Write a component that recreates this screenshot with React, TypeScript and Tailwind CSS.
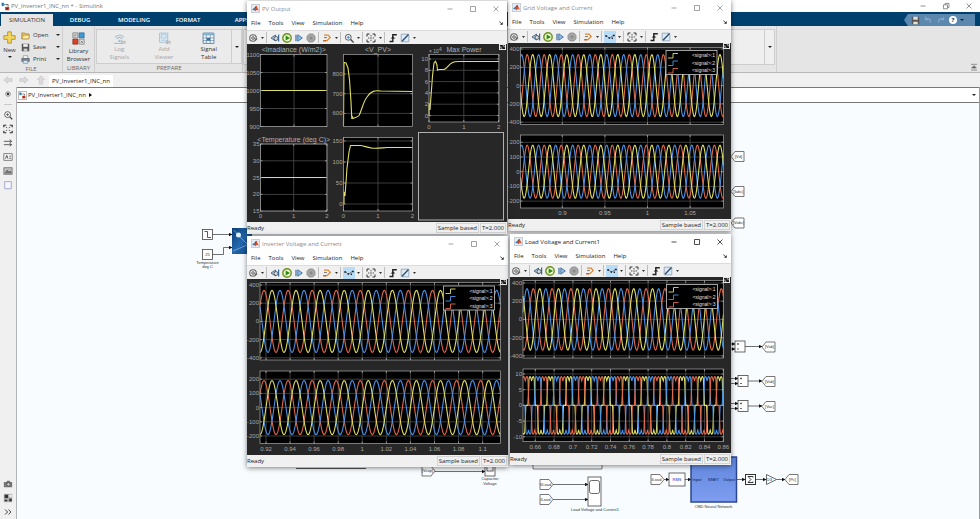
import type { ReactNode } from 'react';
import clsx from 'clsx';

const YELLOW = '#e0df66';
const BLUE = '#4a93e6';
const RED = '#e0694a';

type Tick = { at: number; label: string };

type Axes = {
  x: [number, number];
  y: [number, number];
  xTicks: Tick[];
  yTicks: Tick[];
  showX?: boolean;
  title?: string;
};

type Wave = { color: string; peak: number };

function ticks(start: number, step: number, labels: string[]): Tick[] {
  return labels.map((label, i) => ({ at: start + i * step, label }));
}

function sinePath(axes: Axes, mid: number, amp: number, period: number, peak: number) {
  const pts: string[] = [];
  for (let x = axes.x[0]; x <= axes.x[1]; x += 0.5) {
    const y = mid - amp * Math.cos((2 * Math.PI * (x - peak)) / period);
    pts.push(`${x.toFixed(1)} ${y.toFixed(2)}`);
  }
  return `M${pts.join('L')}`;
}

// six-pulse rectifier current: +120deg, 60deg off, -120deg, 60deg off
function pulsePath(axes: Axes, mid: number, unit: number, period: number, peak: number) {
  const pts: string[] = [];
  for (let x = axes.x[0]; x <= axes.x[1]; x += 0.25) {
    const t = (2 * Math.PI * (x - peak)) / period;
    const c = Math.cos(t);
    const ramp = Math.min(1, Math.max(0, (Math.abs(c) - 0.5) / 0.3 + 0.5));
    const level = Math.sign(c) * ramp * (7.8 + 1.4 * Math.abs(Math.sin(3 * t)));
    pts.push(`${x.toFixed(2)} ${(mid - level * unit).toFixed(2)}`);
  }
  return `M${pts.join('L')}`;
}

function AxesBox({ axes, children }: { axes: Axes; children?: ReactNode }) {
  const [x0, x1] = axes.x;
  const [y0, y1] = axes.y;
  return (
    <g>
      <rect x={x0} y={y0} width={x1 - x0} height={y1 - y0} fill="#000" />
      <g stroke="#4c4c4c" strokeWidth="0.8">
        {axes.xTicks.map((t) => (
          <path key={t.at} d={`M${t.at} ${y0}V${y1}`} />
        ))}
        {axes.yTicks.map((t) => (
          <path key={t.at} d={`M${x0} ${t.at}H${x1}`} />
        ))}
      </g>
      <g fill="none" strokeWidth="1.1">
        {children}
      </g>
      <rect x={x0} y={y0} width={x1 - x0} height={y1 - y0} fill="none" stroke="#969696" strokeWidth="0.8" />
      <g stroke="#a8a8a8" strokeWidth="0.8">
        {axes.xTicks.map((t) => (
          <path key={t.at} d={`M${t.at} ${y1}v-2M${t.at} ${y0}v2`} />
        ))}
        {axes.yTicks.map((t) => (
          <path key={t.at} d={`M${x0} ${t.at}h2M${x1} ${t.at}h-2`} />
        ))}
      </g>
      <g className="text-[6px]" fill="#a8a8a8" dominantBaseline="central">
        {axes.yTicks.map((t) => (
          <text key={t.at} x={x0 - 1} y={t.at} textAnchor="end">
            {t.label}
          </text>
        ))}
        {axes.showX &&
          axes.xTicks.map((t) => (
            <text key={t.at} x={t.at} y={y1 + 5} textAnchor="middle">
              {t.label}
            </text>
          ))}
      </g>
      {axes.title && (
        <text
          className="text-[7px]"
          fill="#b0b0b0"
          x={(x0 + x1) / 2}
          y={y0 - 5}
          textAnchor="middle"
          dominantBaseline="central"
        >
          {axes.title}
        </text>
      )}
    </g>
  );
}

function Legend({ x, y }: { x: number; y: number }) {
  return (
    <g>
      <rect x={x} y={y} width="51" height="24" fill="#000" stroke="#c8c8c8" strokeWidth="0.8" />
      {[YELLOW, BLUE, RED].map((color, i) => (
        <g key={color}>
          <path
            d={`M${x + 2} ${y + 7.5 + i * 7.5}h5v-4.5h5`}
            fill="none"
            stroke={color}
            strokeWidth="0.9"
          />
          <text
            className="text-[5px]"
            fill="#e0e0e0"
            x={x + 49}
            y={y + 4.5 + i * 7.5}
            textAnchor="end"
            dominantBaseline="central"
          >
            {`<signal>:${i + 1}`}
          </text>
        </g>
      ))}
    </g>
  );
}

function PlotArea({ width, height, children }: { width: number; height: number; children: ReactNode }) {
  return (
    <svg
      viewBox={`0 0 ${width} ${height}`}
      className="block w-full bg-[#272727] font-['Liberation_Sans',sans-serif]"
    >
      {children}
      <rect x={width - 8} y="0" width="7" height="6" fill="#e8e8e8" />
      <path d={`M${width - 7} 1h5v4h-5z`} fill="#111" />
      <path
        d={`M${width - 6.2} 2.2v2h1.6M${width - 4.4} 1.8h1.6v1.6`}
        fill="none"
        stroke="#fff"
        strokeWidth="0.7"
      />
    </svg>
  );
}

const SECONDS = ['0', '1', '2'];

function PvPlot() {
  const irradiance: Axes = {
    x: [13.5, 80],
    y: [10.5, 82.5],
    xTicks: [{ at: 47, label: '1' }],
    yTicks: ticks(10.5, 18, ['1100', '1050', '1000', '950', '900']),
    title: '<Irradiance (W/m2)>',
  };
  const voltage: Axes = {
    x: [96.5, 165.5],
    y: [10.5, 82.5],
    xTicks: [{ at: 131, label: '1' }],
    yTicks: ticks(30, 19.7, ['800', '700', '600']),
    title: '<V_PV>',
  };
  const power: Axes = {
    x: [182, 252],
    y: [10.5, 78],
    xTicks: ticks(182, 34.8, SECONDS),
    yTicks: ticks(15, 11.3, ['10', '8', '6', '4', '2', '0']),
    showX: true,
    title: 'Max Power',
  };
  const temperature: Axes = {
    x: [13.5, 80],
    y: [100, 167],
    xTicks: ticks(13.5, 33.2, SECONDS),
    yTicks: ticks(100, 16.8, ['35', '30', '25', '20', '15']),
    showX: true,
    title: '<Temperature (deg C)>',
  };
  const current: Axes = {
    x: [96.5, 165.5],
    y: [93.5, 167],
    xTicks: ticks(96.5, 34.5, SECONDS),
    yTicks: ticks(97, 21, ['150', '100', '50', '0']),
    showX: true,
  };
  return (
    <PlotArea width={260} height={178}>
      <AxesBox axes={irradiance}>
        <path d="M13.5 46.5H80" stroke={YELLOW} />
      </AxesBox>
      <AxesBox axes={voltage}>
        <path
          d="M96.5 82L97 18.5L99 19L101 24L102.5 36L104 58L104.8 75L105 72L106 74.5C108 73 110 74 112 71.5C115 66 116 58 120 53C124 47 128 46 134 47L165.5 47.5"
          stroke={YELLOW}
        />
      </AxesBox>
      <AxesBox axes={power}>
        <path
          d="M182 72V59L183 66L185.5 32L187 19L188.5 17.3L190 21L190.5 26.2L192 25.5H197C201 24 201 21 205 18.8C207 17.6 209 17.5 212 17.5H252"
          stroke={YELLOW}
        />
      </AxesBox>
      <text className="text-[5px]" fill="#b0b0b0" x="182" y="9">
        × 10<tspan dy="-2">4</tspan>
      </text>
      <AxesBox axes={temperature}>
        <path d="M13.5 133.5H80" stroke={YELLOW} />
      </AxesBox>
      <AxesBox axes={current}>
        <path
          d="M97 160V148L98 152L100 124L102 108L103.5 101.5H114C118 102 120 103.6 126 104.2C131 104.6 136 103.7 140 103.5H165.5"
          stroke={YELLOW}
        />
      </AxesBox>
      <rect x="171.5" y="88.5" width="85" height="87.5" fill="none" stroke="#b0b0b0" />
    </PlotArea>
  );
}

const VOLT_LABELS = ['400', '200', '0', '-200', '-400'];
const AMP_LABELS = ['200', '100', '0', '-100', '-200'];

function GridPlot() {
  const xTicks = ticks(54.3, 42.6, ['0.9', '0.95', '1', '1.05']);
  const top: Axes = { x: [12.5, 215.5], y: [4.5, 81.5], xTicks, yTicks: ticks(6, 18.3, VOLT_LABELS) };
  const bottom: Axes = {
    x: [12.5, 215.5],
    y: [92, 165],
    xTicks,
    yTicks: ticks(99.3, 14.7, AMP_LABELS),
    showX: true,
  };
  const waves: Wave[] = [
    { color: RED, peak: 19.2 },
    { color: BLUE, peak: 13.6 },
    { color: YELLOW, peak: 24.7 },
  ];
  return (
    <PlotArea width={223} height={176}>
      <AxesBox axes={top}>
        {waves.map((w) => (
          <path key={w.color} d={sinePath(top, 42.6, 31, 17.02, w.peak)} stroke={w.color} />
        ))}
      </AxesBox>
      <Legend x={158} y={7.5} />
      <AxesBox axes={bottom}>
        {waves.map((w) => (
          <path key={w.color} d={sinePath(bottom, 128.7, 26.5, 17.02, w.peak)} stroke={w.color} />
        ))}
      </AxesBox>
    </PlotArea>
  );
}

function InverterPlot() {
  const xTicks = ticks(19, 24.07, [
    '0.92', '0.94', '0.96', '0.98', '1', '1.02', '1.04', '1.06', '1.08', '1.1',
  ]);
  const top: Axes = { x: [13, 253.5], y: [3.5, 81], xTicks, yTicks: ticks(6, 18.2, VOLT_LABELS) };
  const bottom: Axes = {
    x: [13, 253.5],
    y: [92, 164.5],
    xTicks,
    yTicks: ticks(100.2, 14.2, AMP_LABELS),
    showX: true,
  };
  const waves: Wave[] = [
    { color: RED, peak: 17 },
    { color: BLUE, peak: 33 },
    { color: YELLOW, peak: 25 },
  ];
  return (
    <PlotArea width={261} height={176}>
      <AxesBox axes={top}>
        {waves.map((w) => (
          <path key={w.color} d={sinePath(top, 42.4, 31, 24.07, w.peak)} stroke={w.color} />
        ))}
      </AxesBox>
      <Legend x={196.5} y={7} />
      <AxesBox axes={bottom}>
        {waves.map((w) => (
          <path key={w.color} d={sinePath(bottom, 128.6, 27, 24.07, w.peak)} stroke={w.color} />
        ))}
      </AxesBox>
    </PlotArea>
  );
}

function LoadPlot() {
  const xTicks = ticks(25.3, 18.8, [
    '0.66', '0.68', '0.7', '0.72', '0.74', '0.76', '0.78', '0.8', '0.82', '0.84', '0.86',
  ]);
  const top: Axes = { x: [13, 213.5], y: [3.5, 81], xTicks, yTicks: ticks(6, 18.2, VOLT_LABELS) };
  const bottom: Axes = {
    x: [13, 213.5],
    y: [92, 164.5],
    xTicks,
    yTicks: ticks(97, 15.7, ['10', '5', '0', '-5', '-10']),
    showX: true,
  };
  const voltage: Wave[] = [
    { color: RED, peak: 23.3 },
    { color: BLUE, peak: 17 },
    { color: YELLOW, peak: 29.7 },
  ];
  const current: Wave[] = [
    { color: YELLOW, peak: 21.6 },
    { color: BLUE, peak: 27.9 },
    { color: RED, peak: 15.3 },
  ];
  return (
    <PlotArea width={221} height={176}>
      <AxesBox axes={top}>
        {voltage.map((w) => (
          <path key={w.color} d={sinePath(top, 42.4, 30.7, 18.8, w.peak)} stroke={w.color} />
        ))}
      </AxesBox>
      <Legend x={156.5} y={7.5} />
      <AxesBox axes={bottom}>
        {current.map((w) => (
          <path key={w.color} d={pulsePath(bottom, 128.4, 3.13, 18.8, w.peak)} stroke={w.color} />
        ))}
      </AxesBox>
    </PlotArea>
  );
}

function Glyph({ children, className = 'size-3' }: { children: ReactNode; className?: string }) {
  return (
    <svg viewBox="0 0 12 12" className={clsx('shrink-0', className)} fill="none">
      {children}
    </svg>
  );
}

function Caret() {
  return (
    <svg viewBox="0 0 4 2" className="h-[2px] w-1 shrink-0" fill="#222">
      <path d="M0 0h4L2 2z" />
    </svg>
  );
}

function ToolButton({ label, active, children }: { label: string; active?: boolean; children: ReactNode }) {
  return (
    <button
      type="button"
      aria-label={label}
      className={clsx('flex h-3 w-3 items-center justify-center', active && 'bg-[#b9dcf7]')}
    >
      <Glyph>{children}</Glyph>
    </button>
  );
}

function CaretButton({ label }: { label: string }) {
  return (
    <button type="button" aria-label={label} className="flex h-3 w-[6px] items-center justify-center">
      <svg viewBox="0 0 3 2" className="h-[2px] w-[3px]" fill="#333">
        <path d="M0 0h3L1.5 2z" />
      </svg>
    </button>
  );
}

function Separator() {
  return <span className="mr-[2px] ml-px h-[11px] w-px bg-[#bdbdbd]" />;
}

function ScopeToolbar({ cursors }: { cursors: boolean }) {
  return (
    <div className="flex h-[14px] items-center border-t border-[#dcdcdc] bg-[#f0f0f0]">
      <ToolButton label="Configuration">
        <circle cx="6" cy="6" r="3.3" stroke="#666" strokeWidth="1.1" />
        <circle cx="6" cy="6" r="1.3" stroke="#555" strokeWidth="0.9" />
        <path d="M7.5 7.2h2.7" stroke="#555" />
      </ToolButton>
      <CaretButton label="Configuration options" />
      <Separator />
      <ToolButton label="Step back">
        <path d="M6.5 3v6L2 6z" fill="#a9c9e8" stroke="#46627e" strokeWidth="0.9" />
        <path d="M9.6 2.5v7" stroke="#2f6ca8" strokeWidth="1.2" />
        <circle cx="7" cy="6.5" r="2" fill="#d8dde2" stroke="#555" strokeWidth="0.9" />
      </ToolButton>
      <ToolButton label="Run">
        <circle cx="6" cy="6" r="4.2" fill="#eaf7cf" stroke="#6f8f1f" strokeWidth="1.4" />
        <path d="M4.6 3.4v5.2L9 6z" fill="#2c8a12" />
      </ToolButton>
      <ToolButton label="Step forward">
        <path d="M3 2.8v6.4" stroke="#3c6c9c" strokeWidth="1.2" />
        <path d="M4.8 2.8v6.4L9.3 6z" fill="#8fc0e8" stroke="#3c6c9c" strokeWidth="0.9" />
      </ToolButton>
      <ToolButton label="Stop">
        <path d="M4.2 2h3.6L10 4.2v3.6L7.8 10H4.2L2 7.8V4.2z" fill="#a8a8a8" stroke="#858585" strokeWidth="0.8" />
        <path d="M4.5 4.5h3v3h-3z" fill="#8c8c8c" />
      </ToolButton>
      <Separator />
      <ToolButton label="Highlight block">
        <path d="M3 3.2h4.2L9.2 5.5 6 8.7H3.2" stroke="#e0862c" strokeWidth="1.2" />
        <path d="M3 5.6h3" stroke="#777" />
        <path d="M2 8.8h3" stroke="#b85a1c" strokeWidth="1.2" />
      </ToolButton>
      <CaretButton label="Highlight options" />
      <Separator />
      {cursors ? (
        <ToolButton label="Cursor measurements" active>
          <path d="M2.5 5C4 5 4 7 5.500 7S7 5 9.500 4.600" stroke="#555" strokeWidth="0.8" />
          <path d="M1.200 5h1.800M9 4.600h1.800M4.600 7h1.400M7.600 7.200h1.400" stroke="#222" strokeWidth="1.5" />
        </ToolButton>
      ) : (
        <ToolButton label="Zoom">
          <circle cx="5.3" cy="5.3" r="2.9" fill="#fff" stroke="#555" />
          <path d="M7.6 7.6l3 3" stroke="#444" strokeWidth="1.4" />
          <path d="M3.8 5.3h3M5.3 3.8v3" stroke="#1f6fb8" strokeWidth="0.8" />
        </ToolButton>
      )}
      <CaretButton label="Measurement options" />
      <Separator />
      <ToolButton label="Scale axes">
        <path d="M2 4.5V2h2.5M7.5 2H10v2.500M10 7.500V10H7.500M4.500 10H2V7.500" stroke="#333" />
        <path d="M6 3v1.4M6 7.6V9M3 6h1.4M7.6 6H9" stroke="#555" />
        <circle cx="6" cy="6" r="0.8" fill="#555" />
      </ToolButton>
      <CaretButton label="Scale options" />
      <Separator />
      <ToolButton label="Triggers">
        <path d="M2.500 9.500h3.300V2.700h4" stroke="#222" strokeWidth="1.4" />
        <path d="M3.600 6.600h4.800L6 4.400z" fill="#222" />
      </ToolButton>
      <ToolButton label="Measurements">
        <path d="M2.2 2.2h7.6v7.6H2.2z" fill="#dcebf7" stroke="#8aa0b4" strokeWidth="0.8" />
        <path d="M3 9.3l6.5-6.8" stroke="#2f4d6a" strokeWidth="1.3" />
      </ToolButton>
      <CaretButton label="Measurement panels" />
    </div>
  );
}

function MatlabLogo() {
  return (
    <Glyph className="size-[9px]">
      <path d="M0.5 0.5h11v11H.5z" fill="#e4ebf2" stroke="#9fb0c2" strokeWidth="0.8" />
      <path d="M1.5 7L4.5 5.2 5.6 7.6 3.6 8.6z" fill="#2e77b8" />
      <path d="M4.5 5.2L7 2.2 8 5.5 5.6 8.5z" fill="#3c2430" />
      <path d="M7 2.2C8.4 3.6 9.4 7 10.6 9L8 7.8 5.8 9.8 4.6 8z" fill="#d5512a" />
    </Glyph>
  );
}

function WindowButton({ label, children }: { label: string; children: ReactNode }) {
  return (
    <button type="button" aria-label={label} className="flex h-3 w-[23px] items-center justify-center">
      <svg viewBox="0 0 12 12" className="size-3" fill="none" stroke="currentColor" strokeWidth="0.8">
        {children}
      </svg>
    </button>
  );
}

type ScopeProps = {
  title: string;
  place: string;
  active?: boolean;
  cursors?: boolean;
  children: ReactNode;
};

function ScopeWindow({ title, place, active = false, cursors = true, children }: ScopeProps) {
  return (
    <section
      aria-label={title}
      className={clsx(
        'absolute flex flex-col bg-white text-[6px] leading-[8px] shadow-[0_1px_5px_rgba(0,0,0,0.5)]',
        place,
      )}
    >
      <header
        className={clsx('flex h-[15px] items-center pl-1', active ? 'text-[#222]' : 'text-[#8c8c8c]')}
      >
        <MatlabLogo />
        <h2 className="ml-[2px] flex-1 whitespace-nowrap">{title}</h2>
        <WindowButton label="Minimize">
          <path d="M3.5 6h5" />
        </WindowButton>
        <WindowButton label="Maximize">
          <path d="M3.5 3.5h5v5h-5z" />
        </WindowButton>
        <WindowButton label="Close">
          <path d="M3.5 3.5l5 5M8.5 3.5l-5 5" />
        </WindowButton>
      </header>
      <nav className="flex h-[14px] items-center gap-2 px-1 text-[#1c1c1c]">
        {['File', 'Tools', 'View', 'Simulation', 'Help'].map((m) => (
          <button key={m} type="button">
            {m}
          </button>
        ))}
        <Glyph className="ml-auto size-1">
          <path d="M1 2l7 6" stroke="#222" strokeWidth="2.5" />
          <path d="M11 3v8H3z" fill="#222" />
        </Glyph>
      </nav>
      <ScopeToolbar cursors={cursors} />
      {children}
      <footer className="flex h-3 items-center gap-px bg-[#f0f0f0] pr-px text-[#1c1c1c]">
        <span className="flex-1">Ready</span>
        <span className="border border-[#d4d4d4] px-px">Sample based</span>
        <span className="border border-[#d4d4d4] px-px">T=2.000</span>
      </footer>
    </section>
  );
}

function SimulinkLogo({ className }: { className?: string }) {
  return (
    <Glyph className={className}>
      <path d="M1 1l5 2.5L1 6z" fill="#1f6fa8" />
      <path d="M1 1h3v3H1z" fill="#2b86b8" />
      <path d="M6 3.5h3.5V6" stroke="#333" />
      <path d="M5.5 6.5h5.5v4.5H5.5z" fill="#c8452a" />
      <path d="M7 7.8h2.5v2H7z" fill="#6e1d12" />
    </Glyph>
  );
}

function TitleBar() {
  return (
    <header className="flex h-3 items-center bg-white pl-px text-[#777]">
      <SimulinkLogo className="size-[9px]" />
      <h1 className="ml-px flex-1">PV_Inverter1_INC_nn * - Simulink</h1>
      <WindowButton label="Minimize">
        <path d="M3.5 6h5" />
      </WindowButton>
      <WindowButton label="Restore">
        <path d="M3.5 4.8h4v4h-4zM5 4.8V3.4h4v4H7.5" />
      </WindowButton>
      <WindowButton label="Close">
        <path d="M3.5 3.5l5 5M8.5 3.5l-5 5" />
      </WindowButton>
    </header>
  );
}

function TabStrip() {
  return (
    <nav className="flex h-[14px] items-end bg-[#00406f] text-white">
      <button type="button" className="ml-px h-3 w-[52px] bg-[#e5e5e5] text-[#333]">
        SIMULATION
      </button>
      {['DEBUG', 'MODELING', 'FORMAT', 'APPS'].map((t) => (
        <button key={t} type="button" className="h-3 w-[54px] font-semibold">
          {t}
        </button>
      ))}
      <div className="mr-[5px] ml-auto flex h-3 w-[71px] items-center gap-[3px] bg-[#5c88b0] pl-[7px] [clip-path:polygon(4px_0,100%_0,100%_100%,4px_100%,0_50%)]">
        <button type="button" aria-label="Save">
          <Glyph className="size-[9px]">
            <path d="M1 1h10v10H1z" fill="#555" />
            <path d="M3 1h6v4H3z" fill="#ddd" />
            <path d="M3 7.5h6V11H3z" fill="#e8e0c8" />
          </Glyph>
        </button>
        <button type="button" aria-label="Undo">
          <Glyph className="size-[10px]">
            <path d="M3 2v3.5h3.5M3 5.5C6 3 10 5 8.5 9" stroke="#83a6c6" strokeWidth="1.5" />
          </Glyph>
        </button>
        <button type="button" aria-label="Redo">
          <Glyph className="size-[10px]">
            <path d="M9 2v3.5H5.5M9 5.5C6 3 2 5 3.5 9" stroke="#83a6c6" strokeWidth="1.5" />
          </Glyph>
        </button>
        <button
          type="button"
          aria-label="Help"
          className="size-2 rounded-full bg-white text-center font-bold text-[#234]"
        >
          ?
        </button>
        <Caret />
      </div>
    </nav>
  );
}

function RibbonGroup({ label, className, children }: { label?: string; className: string; children: ReactNode }) {
  return (
    <div className={clsx('flex shrink-0 flex-col border-r border-[#cfcfcf]', className)}>
      <div className="flex h-[39px] items-stretch pt-[2px]">{children}</div>
      {label && <p className="text-center text-[#6a6a6a]">{label}</p>}
    </div>
  );
}

function FileRow({ label, children }: { label: string; children: ReactNode }) {
  return (
    <button type="button" className="flex h-3 w-[39px] items-center text-left">
      <Glyph className="size-[9px]">{children}</Glyph>
      <span className="ml-[3px] flex-1">{label}</span>
      <Caret />
    </button>
  );
}

function GalleryItem({ lines, disabled, children }: { lines: string[]; disabled?: boolean; children: ReactNode }) {
  return (
    <button
      type="button"
      disabled={disabled}
      className={clsx('flex flex-1 flex-col items-center pt-[2px]', disabled && 'text-[#a6a6a6]')}
    >
      <Glyph className="size-[13px]">{children}</Glyph>
      {lines.map((l) => (
        <span key={l}>{l}</span>
      ))}
    </button>
  );
}

function Ribbon() {
  return (
    <div className="flex h-[47px] border-b border-[#b8b8b8] bg-[#e5e5e5] text-[#333]">
      <RibbonGroup label="FILE" className="w-[63px]">
        <button type="button" className="flex w-[19px] flex-col items-center pt-[3px]">
          <Glyph className="size-[13px]">
            <path d="M4.3 .8h3.4v3.5h3.5v3.4H7.7v3.5H4.3V7.7H.8V4.3h3.5z" fill="#f5d65c" stroke="#b38f1d" strokeWidth="0.8" />
          </Glyph>
          <span className="mt-[2px] mb-[2px]">New</span>
          <Caret />
        </button>
        <div className="ml-[2px] pt-px">
          <FileRow label="Open">
            <path d="M1 2.5h4l1 1.3h4.5v6.7H1z" fill="#e9c35a" stroke="#9a7a26" strokeWidth="0.8" />
            <path d="M3 5.5h8.5l-1.5 5H1.4z" fill="#fbe9a8" stroke="#9a7a26" strokeWidth="0.7" />
          </FileRow>
          <FileRow label="Save">
            <path d="M1 1h10v10H1z" fill="#555" />
            <path d="M3 1.5h6v3.6H3z" fill="#f0f0f0" />
            <path d="M3.5 7.5h5V11h-5z" fill="#ccc" />
          </FileRow>
          <FileRow label="Print">
            <path d="M3 1h6v4H3z" fill="#fff" stroke="#777" strokeWidth="0.8" />
            <path d="M1 4.6h10v4H1z" fill="#7d8894" stroke="#4c5660" strokeWidth="0.8" />
            <path d="M3 7.4h6V11H3z" fill="#dfeefa" stroke="#5b7893" strokeWidth="0.8" />
          </FileRow>
        </div>
      </RibbonGroup>
      <RibbonGroup label="LIBRARY" className="w-8">
        <button type="button" className="flex flex-1 flex-col items-center pt-1">
          <Glyph className="mb-[2px] size-[13px]">
            <path d="M.8 .8h4.6v4.6H.8z" fill="#d8d8d8" stroke="#777" strokeWidth="0.7" />
            <path d="M6.6 .8h4.6v4.6H6.6z" fill="#3d9ad8" stroke="#2a6898" strokeWidth="0.7" />
            <path d="M.8 6.6h4.6v4.6H.8z" fill="#d8402a" stroke="#8c2615" strokeWidth="0.7" />
            <path d="M6.6 6.6h4.6v4.6H6.6z" fill="#eee" stroke="#777" strokeWidth="0.7" />
            <path d="M2 3.5l2-1M8 8l2 2M8 10l2-2" stroke="#555" strokeWidth="0.7" />
          </Glyph>
          <span>Library</span>
          <span>Browser</span>
        </button>
      </RibbonGroup>
      <RibbonGroup label="PREPARE" className="w-[148px] pl-px">
        <div className="mt-px flex flex-1 border border-[#cdcdcd] bg-[#ebebeb]">
          <GalleryItem lines={['Log', 'Signals']} disabled>
            <path d="M2 5C4 2 8 2 10 5M3.5 6.5C5 4.5 7 4.5 8.5 6.5" stroke="#9cc0d8" strokeWidth="1.1" />
            <circle cx="6" cy="8.2" r="1.1" fill="#9cc0d8" />
            <path d="M1 10.5h7M8 8l2.5 1.5L8 11zM11 8v3" stroke="#aaa" strokeWidth="0.8" />
          </GalleryItem>
          <GalleryItem lines={['Add', 'Viewer']} disabled>
            <path d="M1.5 1h7.5v8.5H1.5z" fill="#e4eef5" stroke="#a9bfce" strokeWidth="0.9" />
            <path d="M3 2.5h4.5v3H3zM3 7.5h4.5" stroke="#9cc0d8" strokeWidth="0.8" />
            <path d="M8 8l2.5 1.5L8 11zM11 8v3" stroke="#aaa" strokeWidth="0.8" />
          </GalleryItem>
          <GalleryItem lines={['Signal', 'Table']}>
            <path d="M1 1h10v9.5H1z" fill="#fff" stroke="#5b87a8" strokeWidth="0.9" />
            <path d="M1 1h10v2.2H1z" fill="#7fb2d4" />
            <path d="M1 5.5h10M1 8h10M4 3v7.5M7.6 3v7.5" stroke="#5b87a8" strokeWidth="0.7" />
            <path d="M4.5 5.5h3V8h-3z" fill="#3d6f94" />
          </GalleryItem>
          <button
            type="button"
            aria-label="More tools"
            className="flex w-[10px] items-center justify-center border-l border-[#cdcdcd]"
          >
            <Caret />
          </button>
        </div>
      </RibbonGroup>
      <RibbonGroup className="w-[534px] pr-px">
        <div className="mt-px flex flex-1 border border-[#cdcdcd] bg-[#efefef]">
          <button
            type="button"
            aria-label="More results"
            className="ml-auto flex w-[10px] items-center justify-center border-l border-[#cdcdcd]"
          >
            <Caret />
          </button>
        </div>
      </RibbonGroup>
      <button type="button" aria-label="Collapse ribbon" className="mt-auto mr-[2px] mb-px ml-auto">
        <Glyph className="size-2">
          <path d="M1.5 2h9M6 4l3.5 3.5h-7zM1.5 10.5h9" fill="#666" stroke="#666" />
        </Glyph>
      </button>
    </div>
  );
}

function DocumentTabs() {
  return (
    <div className="flex h-[14px] items-end bg-[#f0f0f0]">
      <div className="flex h-[14px] w-[49px] items-center justify-around">
        <Glyph className="size-[10px]">
          <path d="M1 6l4.5-4v2.3H11v3.4H5.5V10z" fill="#dadada" stroke="#c4c4c4" strokeWidth="0.7" />
        </Glyph>
        <Glyph className="size-[10px]">
          <path d="M11 6L6.5 2v2.3H1v3.4h5.5V10z" fill="#dadada" stroke="#c4c4c4" strokeWidth="0.7" />
        </Glyph>
        <Glyph className="size-[10px]">
          <path d="M6 1l4.5 4.5H8V11H4V5.5H1.5z" fill="#dadada" stroke="#c4c4c4" strokeWidth="0.7" />
        </Glyph>
      </div>
      <button type="button" className="h-3 bg-white px-[3px] text-[#222]">
        PV_Inverter1_INC_nn
      </button>
    </div>
  );
}

function SideButton({ label, children }: { label: string; children: ReactNode }) {
  return (
    <button type="button" aria-label={label} className="flex h-[14px] w-full items-center justify-center">
      <Glyph className="size-[10px]">{children}</Glyph>
    </button>
  );
}

function SideBar() {
  return (
    <aside className="flex w-[17px] shrink-0 flex-col border-r border-[#b4b4b4] bg-[#f0f0f0]">
      <SideButton label="Hide browser">
        <circle cx="6" cy="6" r="2.8" fill="#ddd" stroke="#888" />
        <circle cx="6" cy="6" r="1.4" fill="#333" />
      </SideButton>
      <span className="mx-1 my-[3px] h-px shrink-0 bg-[#c8c8c8]" />
      <SideButton label="Zoom in">
        <circle cx="5.5" cy="5.5" r="3.5" fill="#fff" stroke="#444" />
        <path d="M8.2 8.2l3 3" stroke="#333" strokeWidth="1.5" />
        <path d="M3.8 5.5h3.4M5.5 3.8v3.4" stroke="#555" />
      </SideButton>
      <SideButton label="Fit to view">
        <path d="M1 4V1.5h3M8 1.5h3V4M11 8v2.5H8M4 10.5H1V8" stroke="#333" strokeWidth="1.4" />
        <path d="M3.5 3.7l1.5 1M8.500 3.700l-1.500 1M3.500 8.300l1.500-1M8.500 8.300l-1.500-1" stroke="#444" />
      </SideButton>
      <SideButton label="Signal lines">
        <path d="M1 4h9M1 8h9M8 2l2.5 2L8 6M8 6.5L10.5 8 8 9.8" stroke="#444" />
      </SideButton>
      <SideButton label="Annotation">
        <path d="M1 2h10v8H1z" fill="#fff" stroke="#666" />
        <path d="M3 8l1.5-4L6 8M7.5 5h2M7.5 7.5h2" stroke="#333" />
      </SideButton>
      <SideButton label="Image">
        <path d="M1 2h10v8H1z" fill="#bbb" stroke="#777" />
        <path d="M2 9l3-4 2 2.5L8.5 6 10 9" fill="#777" stroke="#555" strokeWidth="0.8" />
      </SideButton>
      <SideButton label="Area">
        <path d="M2 2h8v8.5H2z" fill="#f4f4ff" stroke="#9a9ac4" />
      </SideButton>
      <div className="mt-auto">
        <SideButton label="Camera">
          <path d="M1 3.5h3L5 2h3l1 1.5h2V10H1z" fill="#777" />
          <circle cx="6.5" cy="6.5" r="2" fill="#ddd" stroke="#444" />
        </SideButton>
        <SideButton label="Model data">
          <path d="M1 1h10v10H1z" fill="#aaa" />
          <path d="M2 2h4v4H2zM2 8h3v2H2zM7.5 7h3v3h-3z" fill="#333" />
          <path d="M7.5 2h3v3h-3z" fill="#eee" />
        </SideButton>
        <SideButton label="More">
          <path d="M2.5 3l3 3-3 3M6.5 3l3 3-3 3" stroke="#444" strokeWidth="1.2" />
        </SideButton>
      </div>
    </aside>
  );
}

// goto/from tags point left or right depending on the signal direction
function Tag({ x, y, text, flip = false }: { x: number; y: number; text: string; flip?: boolean }) {
  return (
    <g>
      <path
        d={flip ? `M${x} ${y - 5}h9l4 5l-4 5h-9z` : `M${x} ${y}l4-5h9v10h-9z`}
        fill="#fff"
        stroke="#555"
        strokeWidth="0.8"
      />
      <text x={x + (flip ? 5.5 : 7.5)} y={y + 1.2}>
        {text}
      </text>
    </g>
  );
}

function Wire({ d }: { d: string }) {
  return <path d={d} fill="none" stroke="#333" strokeWidth="0.7" markerEnd="url(#arrow)" />;
}

function SumBlock({ x, y }: { x: number; y: number }) {
  return (
    <g>
      <Wire d={`M730 ${y - 2.5}H${x}`} />
      <Wire d={`M730 ${y + 2.5}H${x}`} />
      <rect x={x} y={y - 5.5} width="10" height="11" fill="#fff" stroke="#444" strokeWidth="0.8" />
      <path d={`M${x + 2} ${y - 2.5}h2m-1-1v2M${x + 2} ${y + 2.5}h2`} stroke="#333" strokeWidth="0.7" />
      <Wire d={`M${x + 10} ${y}H762`} />
    </g>
  );
}

function ModelDiagram() {
  return (
    <svg
      viewBox="17 103 963 416"
      className="block h-[416px] w-[963px] font-['Liberation_Sans',sans-serif] text-[4px]"
      textAnchor="middle"
      fill="#333"
    >
      <defs>
        <marker id="arrow" markerWidth="4" markerHeight="4" refX="3.5" refY="2" orient="auto" markerUnits="userSpaceOnUse">
          <path d="M0 0l4 2-4 2z" fill="#111" />
        </marker>
        <linearGradient id="panel" x1="0" y1="0" x2="1" y2="1">
          <stop offset="0" stopColor="#0c3d78" />
          <stop offset="0.5" stopColor="#2368ac" />
          <stop offset="1" stopColor="#0f4585" />
        </linearGradient>
        <linearGradient id="net" x1="0" y1="0" x2="0" y2="1">
          <stop offset="0" stopColor="#5f86dc" />
          <stop offset="1" stopColor="#7f9df0" />
        </linearGradient>
      </defs>

      <rect x="202.5" y="229.5" width="10" height="10" fill="#fff" stroke="#444" strokeWidth="0.8" />
      <path d="M204.5 231.5h3v6h3.5" fill="none" stroke="#333" strokeWidth="0.8" />
      <rect x="202.5" y="249.5" width="10" height="10" fill="#fff" stroke="#444" strokeWidth="0.8" />
      <text x="207.5" y="256">
        25
      </text>
      <text x="207.5" y="263.5">
        Temperature
      </text>
      <text x="207.5" y="267.5">
        deg C
      </text>
      <Wire d="M212.5 234.5H232" />
      <Wire d="M212.5 254.5H223.5V247.5H232" />
      <rect x="232" y="228" width="20" height="26" fill="url(#panel)" />
      <path d="M238 235l9 9M233 251l14-6M238 235l-4-5" stroke="#9cc8ee" strokeWidth="0.6" />
      <circle cx="238.5" cy="235" r="2.5" fill="#dff0ff" />

      <Tag x={731} y={156.5} text="[Vd]" />
      <Tag x={731} y={191.5} text="[Iabc]" />
      <Tag x={731} y={223} text="[Vabc]" />

      <SumBlock x={735} y={346.5} />
      <Tag x={762} y={347} text="[Vab]" />
      <SumBlock x={738} y={381} />
      <Tag x={762} y={381.5} text="[Vab]" />
      <SumBlock x={738} y={406} />
      <Tag x={762} y={406.5} text="[Vac]" />

      <path d="M296 468.5h70" stroke="#555" />
      <path d="M533 460v9h69v-9" fill="none" stroke="#555" strokeWidth="0.8" />
      <Tag x={422} y={471} text="[Vcap]" flip />
      <Wire d="M435 471.5H485" />
      <rect x="485" y="462" width="10" height="14" fill="#fff" stroke="#444" strokeWidth="0.8" />
      <rect x="487" y="464" width="6" height="7" fill="#fff" stroke="#444" strokeWidth="0.8" />
      <text x="490" y="480">
        Capacitor
      </text>
      <text x="490" y="484.5">
        Voltage
      </text>

      <Tag x={540} y={484.5} text="VLoad" flip />
      <Tag x={540} y={499.5} text="ILoad" flip />
      <Wire d="M553 484.5H588" />
      <Wire d="M553 499.5H588" />
      <rect x="588" y="477" width="13" height="29" fill="#fff" stroke="#444" strokeWidth="0.8" />
      <rect x="589.5" y="480.5" width="10" height="13" rx="2" fill="#fff" stroke="#444" strokeWidth="0.8" />
      <text x="595" y="511">
        Load Voltage and Current1
      </text>

      <Tag x={651} y={479.5} text="ILoad" flip />
      <Wire d="M664 479.5H669" />
      <rect x="669" y="473" width="16" height="13" fill="#fff" stroke="#444" strokeWidth="0.8" />
      <text x="677" y="481" fill="#2222c0">
        RMS
      </text>
      <Wire d="M685 479.5H691" />
      <rect x="691" y="457" width="45.5" height="45" fill="url(#net)" stroke="#2c4690" strokeWidth="1.5" />
      <g fill="#0c1a50">
        <text x="697" y="481">
          Input
        </text>
        <text x="713.5" y="481">
          NNET
        </text>
        <text x="729" y="481">
          Output
        </text>
      </g>
      <text x="713.5" y="507.5">
        OBD Neural Network
      </text>
      <Wire d="M737 479.5H745" />
      <rect x="745.5" y="474.5" width="10" height="10" fill="#fff" stroke="#333" />
      <path d="M753 477.5v-1h-5l3 3-3 3h5v-1" fill="none" stroke="#222" strokeWidth="0.9" />
      <Wire d="M756 479.5H766" />
      <path d="M766.5 474.5v10l10-5z" fill="#fff" stroke="#444" strokeWidth="0.8" />
      <text x="769.5" y="481">
        1/3
      </text>
      <Wire d="M776.5 479.5H785" />
      <Tag x={785} y={479.5} text="[Pc]" />
    </svg>
  );
}

export default function App() {
  return (
    <main className="relative flex h-screen flex-col overflow-hidden bg-[#f0f0f0] font-['Open_Sans',sans-serif] text-[6px] leading-[8px]">
      <TitleBar />
      <TabStrip />
      <Ribbon />
      <DocumentTabs />
      <div className="flex min-h-0 flex-1">
        <SideBar />
        <div className="flex min-w-0 flex-1 flex-col border-r border-[#999]">
          <div className="flex h-4 shrink-0 items-center gap-px border-y border-[#777] bg-white px-px text-[#222]">
            <span className="border border-[#bbb]">
              <SimulinkLogo className="size-[7px]" />
            </span>
            <a href="#model">PV_Inverter1_INC_nn</a>
            <svg viewBox="0 0 3 4" className="ml-[2px] h-1 w-[3px]">
              <path d="M0 0l3 2-3 2z" />
            </svg>
            <span className="mr-[2px] ml-auto">
              <Caret />
            </span>
          </div>
          <div id="model" className="flex-1 overflow-hidden bg-[#f8fcff]">
            <ModelDiagram />
          </div>
        </div>
      </div>

      <ScopeWindow title="Grid Voltage and Current" place="left-[508px] top-0 w-[223px]">
        <GridPlot />
      </ScopeWindow>
      <ScopeWindow title="PV Output" place="left-[247px] top-px w-[260px]" cursors={false}>
        <PvPlot />
      </ScopeWindow>
      <ScopeWindow title="Inverter Voltage and Current" place="left-[247px] top-[236px] w-[261px]">
        <InverterPlot />
      </ScopeWindow>
      <ScopeWindow title="Load Voltage and Current1" place="left-[510px] top-[234px] w-[221px]" active>
        <LoadPlot />
      </ScopeWindow>
    </main>
  );
}
